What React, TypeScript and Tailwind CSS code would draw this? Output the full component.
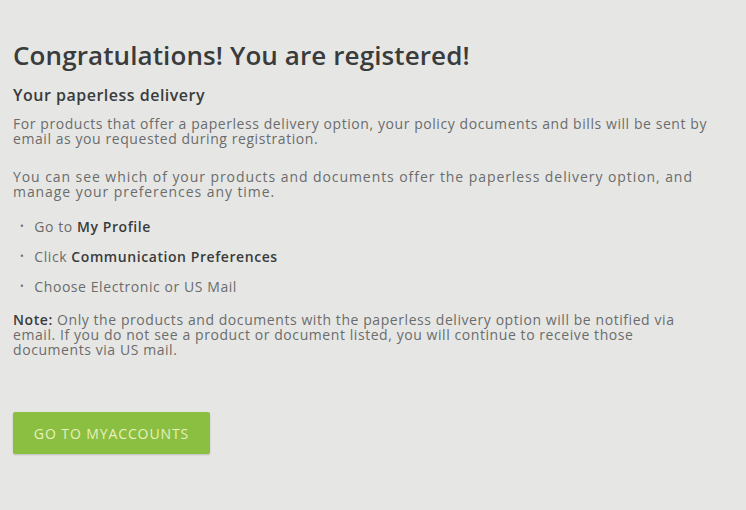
import React from "react";

export default function App() {
  const body = "text-[14px] leading-[15px] text-[#6b6c6c] whitespace-nowrap";
  return (
    <div className="w-[746px] h-[510px] bg-[#e6e7e5] overflow-hidden" style={{ fontFamily: '"Open Sans", sans-serif' }}>
      <div className="pl-[13px] pt-[39px]">
        <h1 className="text-[26px] leading-[32px] font-semibold text-[#3a3b3b] tracking-[0.1px]">Congratulations! You are registered!</h1>
        <h2 className="mt-[15px] text-[16px] leading-[18px] font-semibold tracking-[0.5px] text-[#3a3b3b]">Your paperless delivery</h2>
        <p className={`mt-[12px] ${body} tracking-[0.57px]`}>
          For products that offer a paperless delivery option, your policy documents and bills will be sent by
          <br />
          email as you requested during registration.
        </p>
        <p className={`mt-[23px] ${body} tracking-[0.93px]`}>
          You can see which of your products and documents offer the paperless delivery option, and
          <br />
          manage your preferences any time.
        </p>
        <ul className={`mt-[20px] flex flex-col gap-[15px] ${body} tracking-[0.57px]`}>
          <li className="flex items-center gap-[10px] pl-[7px]"><span className="text-[10px]">•</span><span>Go to <b className="font-semibold text-[#3a3b3b]">My Profile</b></span></li>
          <li className="flex items-center gap-[10px] pl-[7px]"><span className="text-[10px]">•</span><span>Click <b className="font-semibold text-[#3a3b3b]">Communication Preferences</b></span></li>
          <li className="flex items-center gap-[10px] pl-[7px]"><span className="text-[10px]">•</span><span>Choose Electronic or US Mail</span></li>
        </ul>
        <p className={`mt-[18px] ${body} tracking-[0.57px]`}>
          <b className="font-semibold text-[#3a3b3b]">Note:</b> Only the products and documents with the paperless delivery option will be notified via
          <br />
          email. If you do not see a product or document listed, you will continue to receive those
          <br />
          documents via US mail.
        </p>
        <button className="mt-[55px] w-[197px] h-[42px] bg-[#8bbf41] rounded-[2px] text-[14px] tracking-[0.9px] text-[#e8f0bd] uppercase shadow-[0_1px_2px_rgba(0,0,0,0.18)]">
          Go to MyAccounts
        </button>
      </div>
    </div>
  );
}
